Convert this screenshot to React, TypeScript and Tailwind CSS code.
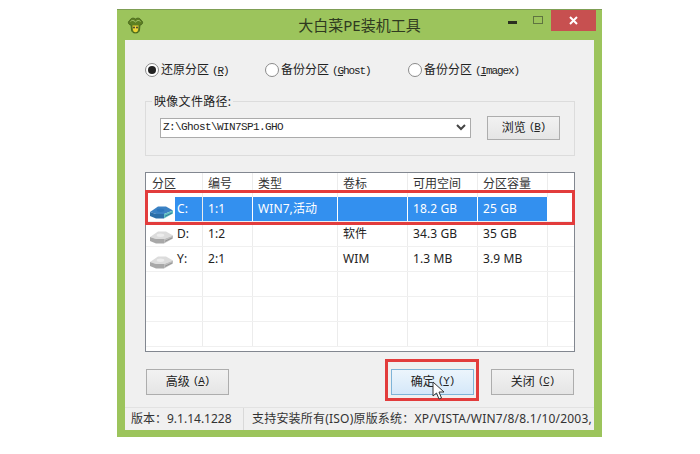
const sans = "font-['Noto_Sans','Noto_Sans_CJK_SC',sans-serif]";

function Mascot() {
  return (
    <svg width="17" height="17" viewBox="0 0 17 17">
      <path d="M4 8c-3 0-3.500-4-1-4.500C3.500 1 6.500 .5 8.500 2c2-1.500 5-1 5.500 1.500 2.500.5 2 4.500-1 4.500l-.5 5c-.5 2.500-2 3-4 3s-3.500-.5-4-3z" fill="#5c7f22" stroke="#3f5a17" strokeWidth=".8" />
      <path d="M5.500 8.500h6l-.5 4.500c-.3 1.500-1.300 2.200-2.500 2.200S6.300 14.500 6 13z" fill="#ecd335" />
      <circle cx="7" cy="10.500" r=".9" fill="#333" />
      <circle cx="10" cy="10.500" r=".9" fill="#333" />
      <path d="M3.500 4.500c1.500-1.500 3-1.500 5 .5 2-2 3.500-2 5-.5" fill="none" stroke="#a5c46a" strokeWidth="1" />
    </svg>
  );
}

function Drive({ active }: { active?: boolean }) {
  const top = active ? "#3b82c4" : "#dcdcdc";
  const front = active ? "#2c6fa8" : "#a8a8a8";
  const end = active ? "#5fc0c0" : "#bdbdbd";
  const line = active ? "#235a8c" : "#7f7f7f";
  return (
    <svg width="25" height="15" viewBox="0 0 25 15">
      <path d="M1 8 9 2.500h8L24 6.500 15 10H7z" fill={top} />
      <path d="M1 8 7 10v4.500L1 12z" fill={front} />
      <path d="M7 10h8v4.500H7z" fill={front} />
      <path d="M15 10 24 6.500v3L15 14.500z" fill={end} />
      <path d="M16 12.300 23 9" stroke={line} strokeWidth=".7" />
      <ellipse cx="11.500" cy="6.300" rx="3.800" ry="1.700" fill={active ? "#2d77bd" : "#ececec"} />
    </svg>
  );
}

function Hotkey({ k, rest = "" }: { k: string; rest?: string }) {
  return (
    <span className="font-['Liberation_Mono',monospace] text-[11px] tracking-[-1.1px] ml-[3px]">
      (<span className="underline">{k}</span>{rest})
    </span>
  );
}

function Radio({ label, k, rest, checked, width }: { label: string; k: string; rest?: string; checked?: boolean; width: string }) {
  return (
    <div className={`flex items-center gap-[2px] ${width}`}>
      <span className="w-[14px] h-[14px] rounded-full border border-[#8a8a8a] bg-white flex items-center justify-center shrink-0">
        {checked && <span className="w-[8px] h-[8px] rounded-full bg-[#222]" />}
      </span>
      <span className="whitespace-nowrap">{label}<Hotkey k={k} rest={rest} /></span>
    </div>
  );
}

function Btn({ label, k, hot }: { label: string; k: string; hot?: boolean }) {
  return (
    <button className={`w-[83px] h-[26px] border flex items-center justify-center text-[12px] text-[#222] ${hot ? "border-[#7eb4d8] bg-gradient-to-b from-[#ecf5fc] to-[#d5e8f9]" : "border-[#adadad] bg-gradient-to-b from-[#f2f2f2] to-[#e5e5e5]"}`}>
      {label}<Hotkey k={k} />
    </button>
  );
}

const cols = "grid grid-cols-[57px_50px_85px_70px_70px_70px_1fr]";

function Cell({ children, sel }: { children?: React.ReactNode; sel?: boolean }) {
  return (
    <div className={`border-r pl-[5px] flex items-center whitespace-nowrap overflow-hidden ${sel ? "bg-[#3390ef] text-white border-white" : "border-[#ececec]"}`}>
      {children}
    </div>
  );
}

const rows = [
  { d: "C:", n: "1:1", t: "WIN7,活动", l: "", f: "18.2 GB", s: "25 GB", sel: true },
  { d: "D:", n: "1:2", t: "", l: "软件", f: "34.3 GB", s: "35 GB" },
  { d: "Y:", n: "2:1", t: "", l: "WIM", f: "1.3 MB", s: "3.9 MB" },
  { d: "", n: "", t: "", l: "", f: "", s: "" },
  { d: "", n: "", t: "", l: "", f: "", s: "" },
  { d: "", n: "", t: "", l: "", f: "", s: "" },
];

export default function App() {
  return (
    <div className={`w-[700px] h-[454px] bg-white pt-[9px] pl-[117px] overflow-hidden text-[12px] text-[#222] ${sans}`}>
      <div className="relative w-[485px] h-[428px] bg-[#9cc45c] border-t border-[#7f9f55] flex flex-col">
        <div className="h-[30px] flex items-center relative shrink-0">
          <div className="ml-[10px]"><Mascot /></div>
          <div className="absolute left-0 right-0 text-center text-[15px] text-[#2f3a20] leading-[30px]">大白菜PE装机工具</div>
          <div className="absolute right-[6px] top-0 flex h-[21px]">
            <div className="w-[26px] flex items-center justify-center"><span className="w-[9px] h-[3px] bg-[#2a2f20] mt-[3px]" /></div>
            <div className="w-[26px] flex items-center justify-center"><span className="w-[10px] h-[8px] border border-[#5f7440] mb-[2px]" /></div>
            <div className="w-[45px] bg-[#c75050] flex items-center justify-center">
              <svg width="9" height="9" viewBox="0 0 9 9"><path d="M1 1l7 7M8 1 1 8" stroke="#fff" strokeWidth="2" /></svg>
            </div>
          </div>
        </div>
        <div className="relative mx-[8px] bg-[#f0f0f0] h-[390px] flex flex-col">
          <div className="px-[20px] pt-[21px] flex-1">
            <div className="flex">
              <Radio label="还原分区" k="R" checked width="w-[120px]" />
              <Radio label="备份分区" k="G" rest="host" width="w-[143px]" />
              <Radio label="备份分区" k="I" rest="magex" width="w-[150px]" />
            </div>
            <fieldset className="mt-[15px] w-[429px] h-[61px] border border-[#dcdcdc] pl-[14px] pr-[14px]">
              <legend className="-ml-[8px] px-[2px] leading-[14px] tracking-[0.3px]">映像文件路径:</legend>
              <div className="flex items-center mt-[7px]">
                <div className="w-[311px] h-[20px] border border-[#ababab] bg-white flex items-center justify-between pl-[2px] pr-[4px] font-['Liberation_Mono',monospace] text-[11px] tracking-[-0.6px]">
                  <span>Z:\Ghost\WIN7SP1.GHO</span>
                  <svg width="10" height="7" viewBox="0 0 10 7"><path d="M1 1l4 4 4-4" fill="none" stroke="#444" strokeWidth="2" /></svg>
                </div>
                <div className="ml-[16px] w-[73px] h-[24px] border border-[#adadad] bg-gradient-to-b from-[#f2f2f2] to-[#e5e5e5] flex items-center justify-center">
                  浏览<Hotkey k="B" />
                </div>
              </div>
            </fieldset>
            <div className="mt-[16px] w-[430px] h-[180px] border border-[#828790] bg-white overflow-hidden">
              <div className={`${cols} h-[24px] text-[#333]`}>
                {["分区", "编号", "类型", "卷标", "可用空间", "分区容量", ""].map((h, i) => (
                  <div key={i} className={`border-r border-[#ececec] flex items-center pb-[1px] last:border-r-0 ${i === 0 ? "pl-[6px]" : "pl-[5px]"}`}>{h}</div>
                ))}
              </div>
              {rows.map((r, i) => (
                <div key={i} className={`${cols} h-[25px] border-b border-[#f0f0f0] tracking-[0.1px]`}>
                  <div className="border-r border-[#ececec] flex items-center">
                    <div className="w-[29px] pl-[3px] pt-[5px] shrink-0">{r.d && <Drive active={r.sel} />}</div>
                    <div className={`flex-1 h-full flex items-center pl-[2px] ${r.sel ? "bg-[#3390ef] text-white" : ""}`}>{r.d}</div>
                  </div>
                  <Cell sel={r.sel}>{r.n}</Cell>
                  <Cell sel={r.sel}>{r.t}</Cell>
                  <Cell sel={r.sel}>{r.l}</Cell>
                  <Cell sel={r.sel}>{r.f}</Cell>
                  <Cell sel={r.sel}>{r.s}</Cell>
                  <div />
                </div>
              ))}
            </div>
            <div className="mt-[17px] flex pl-[1px]">
              <Btn label="高级" k="A" />
              <div className="ml-[162px]"><Btn label="确定" k="Y" hot /></div>
              <div className="ml-[17px]"><Btn label="关闭" k="C" /></div>
            </div>
          </div>
          <div className="h-[23px] border-t border-[#e2e2e2] flex items-center shrink-0 overflow-hidden whitespace-nowrap text-[#333]">
            <div className="w-[119px] shrink-0 pl-[6px] border-r border-[#d9d9d9] h-full flex items-center">版本：9.1.14.1228</div>
            <div className="pl-[8px] tracking-[0.2px]">支持安装所有(ISO)原版系统：XP/VISTA/WIN7/8/8.1/10/2003,</div>
          </div>
          {/* red annotation boxes */}
          <div className="absolute left-[20px] top-[150px] w-[430px] h-[35px] border-[3px] border-[#e23c3c]" />
          <div className="absolute left-[260px] top-[319px] w-[94px] h-[42px] border-[3px] border-[#e23c3c]" />
          {/* mouse pointer */}
          <svg className="absolute left-[307px] top-[341px]" width="14" height="20" viewBox="0 0 14 20">
            <path d="M1 1v14l3.500-3 2.500 6 2.500-1-2.500-6h5z" fill="#fff" stroke="#333" strokeWidth="1" />
          </svg>
        </div>
      </div>
    </div>
  );
}
